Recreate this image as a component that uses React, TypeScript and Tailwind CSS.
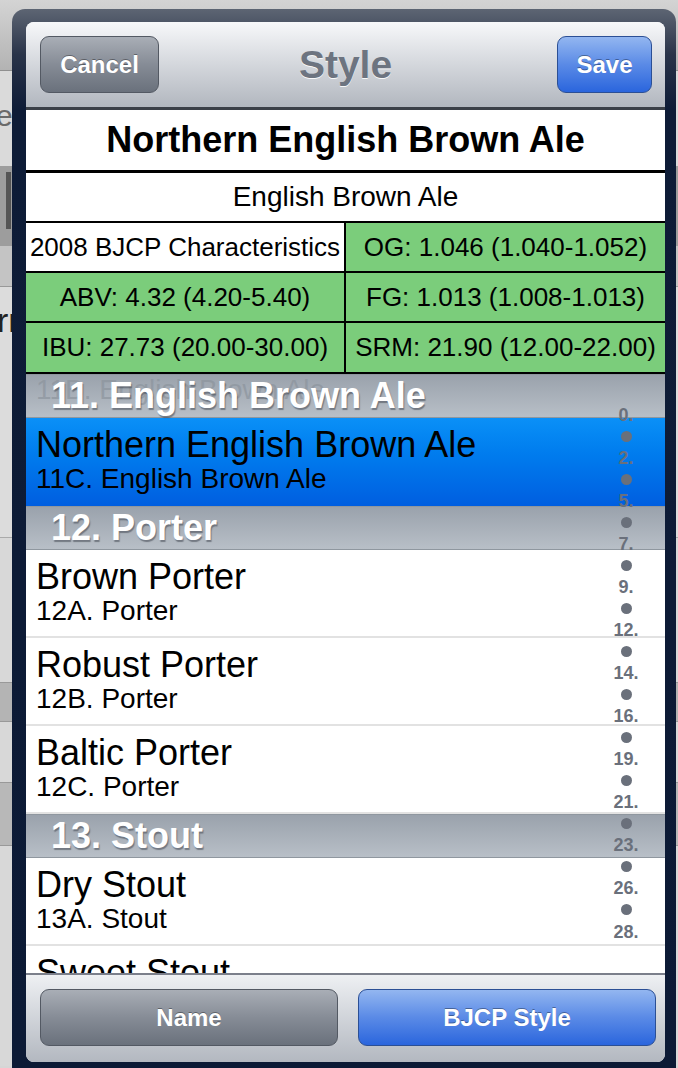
import React from 'react';

type Item = { kind: 'header'; title: string; ghost?: string } | { kind: 'row'; title: string; sub: string; selected?: boolean };

const items: Item[] = [
    { kind: 'header', title: '11. English Brown Ale', ghost: '11B. English Brown Ale' },
    { kind: 'row', title: 'Northern English Brown Ale', sub: '11C. English Brown Ale', selected: true },
    { kind: 'header', title: '12. Porter' },
    { kind: 'row', title: 'Brown Porter', sub: '12A. Porter' },
    { kind: 'row', title: 'Robust Porter', sub: '12B. Porter' },
    { kind: 'row', title: 'Baltic Porter', sub: '12C. Porter' },
    { kind: 'header', title: '13. Stout' },
    { kind: 'row', title: 'Dry Stout', sub: '13A. Stout' },
    { kind: 'row', title: 'Sweet Stout', sub: '13B. Stout' },
];

const indexEntries = ['0.', '•', '2.', '•', '5.', '•', '7.', '•', '9.', '•', '12.', '•', '14.', '•', '16.', '•', '19.', '•', '21.', '•', '23.', '•', '26.', '•', '28.'];

const stats: [string, string][] = [
    ['2008 BJCP Characteristics', 'OG: 1.046 (1.040-1.052)'],
    ['ABV: 4.32 (4.20-5.40)', 'FG: 1.013 (1.008-1.013)'],
    ['IBU: 27.73 (20.00-30.00)', 'SRM: 21.90 (12.00-22.00)'],
];

const Background: React.FC = () => (
    <div className="flex flex-col">
        <div className="h-[71px] border-b border-[#8f8f8f] bg-linear-to-b from-[#d4d4d4] to-[#b3b3b3]" />
        <div className="h-[95px] bg-[#dadada] pt-[28px] text-[30px] leading-[34px] text-[#6a6a6a]">
            <span className="-ml-[4px]">e</span>
        </div>
        <div className="h-[80px] bg-[#9d9d9d] pt-[6px]">
            <div className="ml-[6px] h-[57px] w-[5px] bg-[#555]" />
        </div>
        <div className="h-[41px] border-b border-[#999] bg-[#c4c4c4]" />
        <div className="h-[250px] bg-[#dcdcdc] pt-[14px] text-[34px] leading-[38px] text-[#222]">
            <span className="-ml-[3px]">rn</span>
        </div>
        <div className="h-[145px] border-t border-[#aaa] bg-[#d8d8d8]" />
        <div className="h-[40px] border-y border-[#999] bg-[#b4b4b4]" />
        <div className="h-[60px] bg-[#d8d8d8]" />
        <div className="h-[64px] border-y border-[#999] bg-[#b8b8b8]" />
        <div className="h-[220px] bg-[#d8d8d8]" />
    </div>
);

const NavButton: React.FC<{ label: string; blue?: boolean; className?: string }> = ({ label, blue, className }) => (
    <button
        className={`flex h-[57px] shrink-0 items-center justify-center rounded-[9px] border text-[24px] font-bold text-white [text-shadow:0_-1px_0_rgba(0,0,0,0.35)] ${
            blue
                ? 'border-[#2b4f95] bg-linear-to-b from-[#93b6f0] via-[#5a8ae6] to-[#2a65dd]'
                : 'border-[#535963] bg-linear-to-b from-[#a9aeb6] via-[#868c96] to-[#6a717c]'
        } ${className ?? ''}`}
    >
        {label}
    </button>
);

const SectionHeader: React.FC<{ title: string; ghost?: string }> = ({ title, ghost }) => (
    <div className="relative h-[44px] shrink-0 border-y border-[#8f979f] bg-linear-to-b from-[#9aa2ac] to-[#b8bfc7] pl-[25px] text-[36px] font-bold leading-[41px] text-white [text-shadow:1px_2px_1px_rgba(40,45,55,0.45)]">
        {ghost && (
            <span className="absolute left-[10px] top-[0px] text-[28px] font-normal leading-[30px] text-[#8c949d]/70 [text-shadow:none]">
                {ghost}
            </span>
        )}
        <span className="relative">{title}</span>
    </div>
);

const StyleRow: React.FC<{ title: string; sub: string; selected?: boolean }> = ({ title, sub, selected }) => (
    <div
        className={`h-[88px] shrink-0 pl-[10px] pt-[8px] text-black ${
            selected ? 'bg-linear-to-b from-[#0b90f7] to-[#005ee0]' : 'border-b-2 border-[#e2e2e2] bg-white'
        }`}
    >
        <div className="text-[36px] leading-[38px]">{title}</div>
        <div className="text-[28px] leading-[30px]">{sub}</div>
    </div>
);

export default function App() {
    return (
        <div className="relative h-[1068px] w-[678px] overflow-hidden bg-[#d6d6d6] font-['Liberation_Sans',Arial,sans-serif]">
            <Background />

            <div className="absolute left-[12px] top-[9px] h-[1072px] w-[664px] rounded-t-[13px] bg-[linear-gradient(to_bottom,#5d6573_0px,#2a3449_45px,#0e1c37_100px,#0c1a35_100%)] pl-[14px] pr-[11px] pt-[13px]">
                <div className="flex h-[1040px] flex-col overflow-hidden rounded-[8px] bg-white">
                    {/* nav bar */}
                    <div className="grid h-[88px] shrink-0 grid-cols-[1fr_auto_1fr] items-center border-b-[3px] border-[#3b4048] bg-linear-to-b from-[#f7f8fa] to-[#b2b7bf] px-[13px]">
                        <NavButton label="Cancel" className="ml-[1px] w-[119px]" />
                        <div className="text-[39px] font-bold leading-[44px] text-[#6d7480] [text-shadow:0_1px_0_rgba(255,255,255,0.9)]">
                            Style
                        </div>
                        <NavButton label="Save" blue className="w-[95px] justify-self-end" />
                    </div>

                    {/* table */}
                    <div className="relative flex flex-1 flex-col overflow-hidden bg-white">
                        <div className="flex h-[63px] shrink-0 items-center justify-center border-b-[3px] border-black text-[36px] font-bold">
                            Northern English Brown Ale
                        </div>
                        <div className="flex h-[50px] shrink-0 items-center justify-center border-b-2 border-black text-[28px]">
                            English Brown Ale
                        </div>
                        {stats.map(([left, right], i) => (
                            <div
                                key={i}
                                className={`grid shrink-0 grid-cols-[320px_1fr] border-b-2 border-black text-[26px] ${i === 2 ? 'h-[51px]' : 'h-[50px]'}`}
                            >
                                <div className={`flex items-center justify-center border-r-2 border-black ${i === 0 ? 'bg-white' : 'bg-[#7bcd7b]'}`}>
                                    {left}
                                </div>
                                <div className="flex items-center justify-center bg-[#7bcd7b]">{right}</div>
                            </div>
                        ))}

                        {items.map((it, i) =>
                            it.kind === 'header' ? (
                                <SectionHeader key={i} title={it.title} ghost={it.ghost} />
                            ) : (
                                <StyleRow key={i} title={it.title} sub={it.sub} selected={it.selected} />
                            )
                        )}

                        {/* section index */}
                        <div className="absolute right-[24px] top-[294px] flex w-[30px] flex-col items-center">
                            {indexEntries.map((e, i) => (
                                <div key={i} className="flex h-[21.54px] items-center justify-center text-[18px] font-bold leading-[20px] text-[#6a707b]">
                                    {e === '•' ? <div className="h-[11px] w-[11px] rounded-full bg-[#6a707b]" /> : e}
                                </div>
                            ))}
                        </div>
                    </div>

                    {/* toolbar */}
                    <div className="flex h-[89px] shrink-0 items-center gap-[20px] border-t-2 border-[#7b7f8b] bg-linear-to-b from-[#eef0f3] to-[#b3b8c0] pb-[2px] pl-[14px] pr-[9px]">
                        <NavButton label="Name" className="w-[298px]" />
                        <NavButton label="BJCP Style" blue className="w-[298px]" />
                    </div>
                </div>
            </div>
        </div>
    );
}
